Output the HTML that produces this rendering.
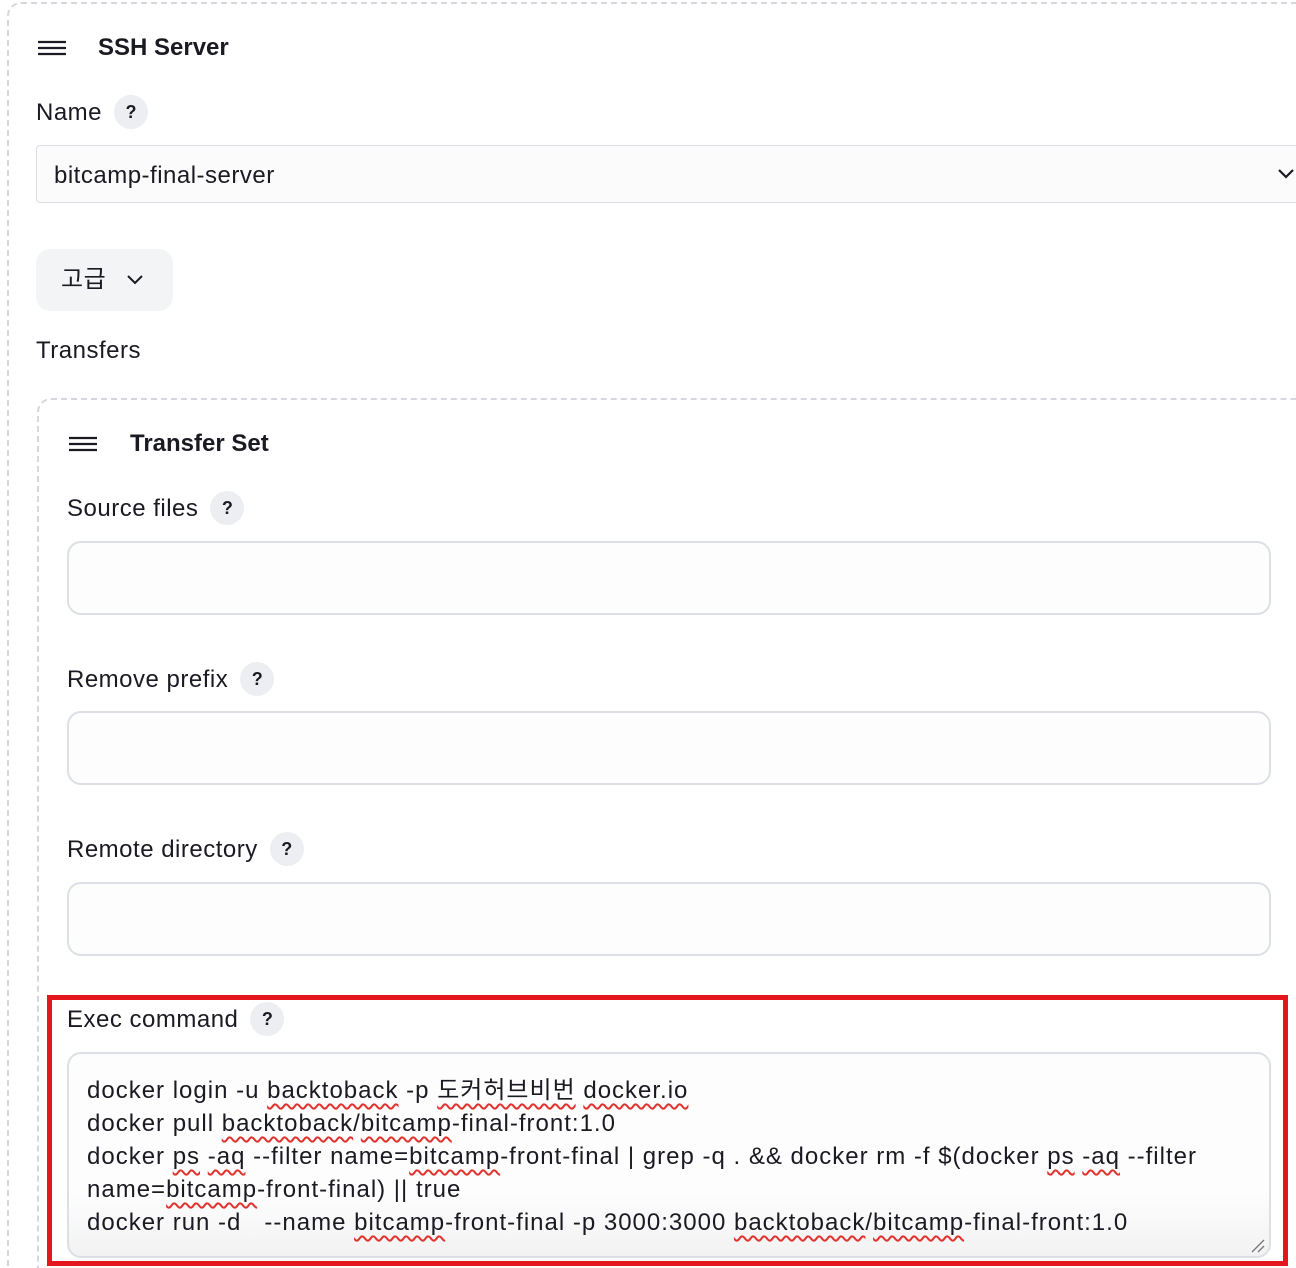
<!DOCTYPE html>
<html><head><meta charset="utf-8"><style>
*{box-sizing:border-box;margin:0;padding:0}
html{width:1296px;height:1268px;overflow:hidden}
body{width:1296px;height:1268px;background:#fff;position:relative;overflow:hidden;font-family:"Liberation Sans","Noto Sans CJK KR",sans-serif;color:#1a1a22}
.a{position:absolute}
.outer{left:7px;top:2px;width:1289px;height:1266px;border:2px dashed #d4d7de;border-right:none;border-bottom:none;border-radius:14px 0 0 0}
.inner{left:37px;top:398px;width:1259px;height:870px;border:2px dashed #d4d7de;border-right:none;border-bottom:none;border-radius:14px 0 0 0}
.h{font-weight:bold;font-size:24px}
.lbl{font-size:24px;line-height:30px;letter-spacing:0.5px}
.q{display:inline-block;width:34px;height:34px;border-radius:50%;background:#eceef2;font-size:18px;font-weight:bold;text-align:center;line-height:34px;vertical-align:middle;margin-left:12px;margin-top:-4px;letter-spacing:0}
.inp{border:2px solid #dcdfe6;border-radius:14px;background:#fdfdfd}
.w{text-decoration:underline wavy #e0332e;text-decoration-thickness:1.5px;text-underline-offset:5px}
.ta{font-size:24px;line-height:33px;white-space:pre;letter-spacing:1px}
</style></head><body>
<div class="a outer"></div>
<svg class="a" style="left:37px;top:40px" width="30" height="16"><path d="M1 2H29M1 8H29M1 14H29" stroke="#1a1a22" stroke-width="2.2"/></svg>
<div class="a h" style="left:98px;top:34px">SSH Server</div>
<div class="a lbl" style="left:36px;top:98px">Name<span class="q">?</span></div>
<div class="a" style="left:36px;top:145px;width:1260px;height:58px;border:1px solid #dadde3;border-right:none;border-radius:4px 0 0 4px;background:#fbfbfc"></div>
<div class="a lbl" style="left:54px;top:161px">bitcamp-final-server</div>
<svg class="a" style="left:1277px;top:168px" width="18" height="12"><path d="M2 2L9 9L16 2" stroke="#1a1a22" stroke-width="2.2" fill="none"/></svg>
<div class="a" style="left:36px;top:249px;width:137px;height:62px;border-radius:14px;background:#f3f4f6"></div>
<div class="a lbl" style="left:61px;top:265px">고급</div>
<svg class="a" style="left:126px;top:274px" width="18" height="12"><path d="M2 2L9 9L16 2" stroke="#1a1a22" stroke-width="2" fill="none"/></svg>
<div class="a lbl" style="left:36px;top:336px">Transfers</div>
<div class="a inner"></div>
<svg class="a" style="left:68px;top:436px" width="30" height="16"><path d="M1 2H29M1 8H29M1 14H29" stroke="#1a1a22" stroke-width="2.2"/></svg>
<div class="a h" style="left:130px;top:430px">Transfer Set</div>
<div class="a lbl" style="left:67px;top:494px">Source files<span class="q">?</span></div>
<div class="a inp" style="left:67px;top:541px;width:1204px;height:74px"></div>
<div class="a lbl" style="left:67px;top:665px">Remove prefix<span class="q">?</span></div>
<div class="a inp" style="left:67px;top:711px;width:1204px;height:74px"></div>
<div class="a lbl" style="left:67px;top:835px">Remote directory<span class="q">?</span></div>
<div class="a inp" style="left:67px;top:882px;width:1204px;height:74px"></div>
<div class="a lbl" style="left:67px;top:1005px">Exec command<span class="q">?</span></div>
<div class="a inp" style="left:67px;top:1052px;width:1204px;height:206px;background:linear-gradient(#fdfdfd 70%,#f2f2f3)"></div>
<div class="a ta" style="left:87px;top:1074px">docker login -u <span class="w">backtoback</span> -p <span class="w">도커허브비번</span> <span class="w">docker.io</span>
docker pull <span class="w">backtoback</span>/<span class="w">bitcamp</span>-final-front:1.0
docker <span class="w">ps</span> <span class="w">-aq</span> --filter name=<span class="w">bitcamp</span>-front-final | grep -q . &amp;&amp; docker rm -f $(docker <span class="w">ps</span> <span class="w">-aq</span> --filter
name=<span class="w">bitcamp</span>-front-final) || true
docker run -d   --name <span class="w">bitcamp</span>-front-final -p 3000:3000 <span class="w">backtoback</span>/<span class="w">bitcamp</span>-final-front:1.0</div>
<svg class="a" style="left:1250px;top:1238px" width="16" height="16"><path d="M2 14L14 2M8 14L14 8" stroke="#777" stroke-width="1.3"/></svg>
<div class="a" style="left:47px;top:995px;width:1241px;height:271px;border:5px solid #e3171c"></div>
</body></html>
